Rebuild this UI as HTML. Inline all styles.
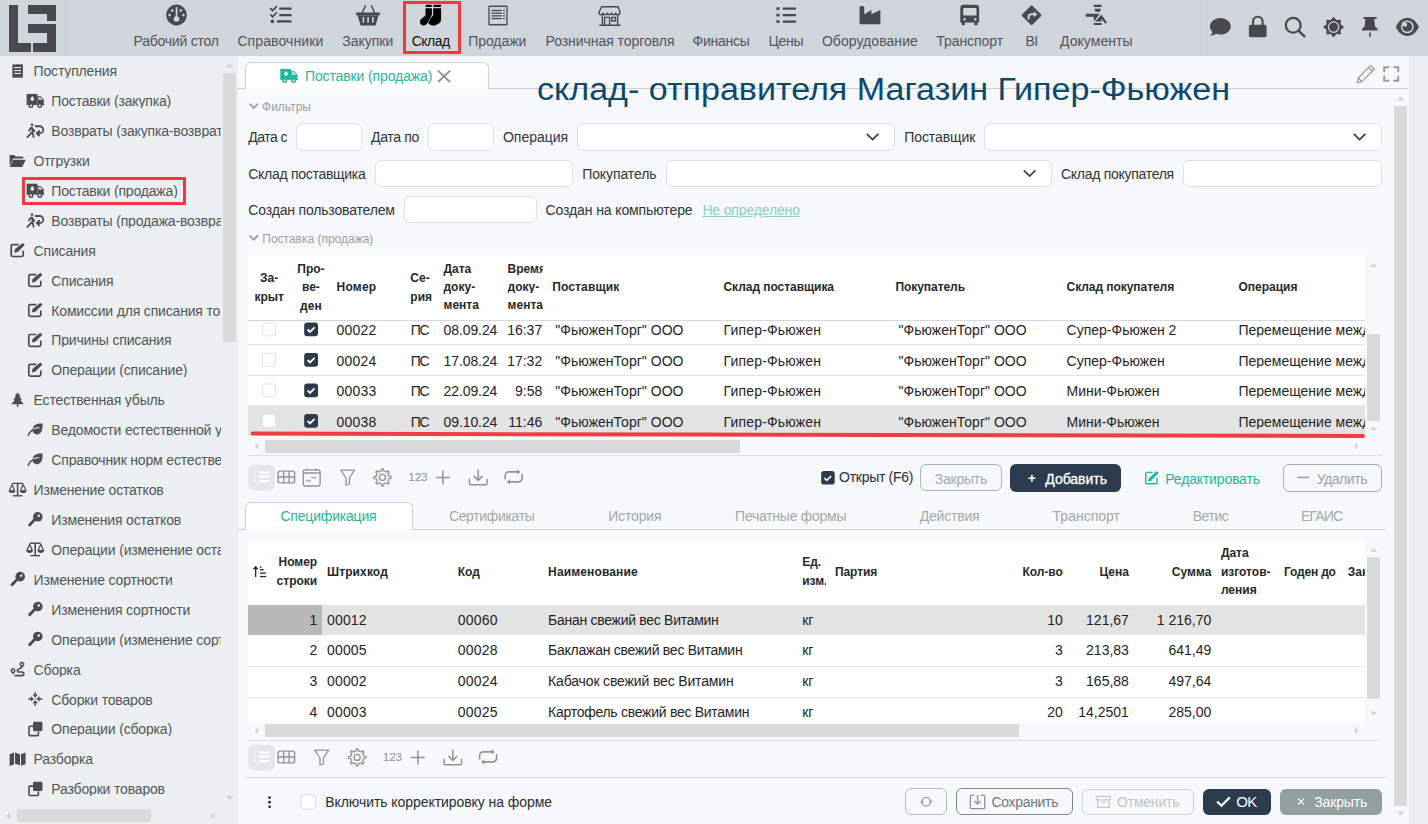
<!DOCTYPE html>
<html><head><meta charset="utf-8"><style>
html,body{margin:0;padding:0;width:1428px;height:824px;overflow:hidden;background:#f7f8fa;}
body{position:relative;font-family:"Liberation Sans", sans-serif;}
.t{position:absolute;white-space:nowrap;font-family:"Liberation Sans", sans-serif;}
svg{overflow:visible}
</style></head><body>
<div style="position:absolute;left:0px;top:0px;width:1428px;height:824px;background:#f7f8fa;border-radius:0px;box-sizing:border-box;"></div>
<div style="position:absolute;left:0px;top:0px;width:1428px;height:56px;background:#d0d4db;border-radius:0px;box-sizing:border-box;"></div>
<div style="position:absolute;left:0px;top:56px;width:238px;height:768px;background:#eceff0;border-radius:0px;box-sizing:border-box;"></div>
<div style="position:absolute;left:1409px;top:56px;width:19px;height:768px;background:#eaeef0;border-radius:0px;box-sizing:border-box;"></div>
<svg style="position:absolute;left:0;top:0" width="66" height="56"><g fill="#47494c"><path d="M9 5h9v38h13v9H9z"/><path d="M28 5h28v16h-9v-7H28z"/><path d="M28 24h28v28H33v-9h14V33H28z"/></g></svg>
<div style="position:absolute;left:65px;top:0px;width:1px;height:56px;background:#c9cdd3;border-radius:0px;box-sizing:border-box;"></div>
<div style="position:absolute;left:1200px;top:0px;width:1px;height:56px;background:#c9cdd3;border-radius:0px;box-sizing:border-box;"></div>
<div class="t" style="left:133.6px;top:34.3px;font-size:14px;line-height:14px;color:#50555b;font-weight:400;letter-spacing:-0.241px;">Рабочий стол</div>
<div class="t" style="left:237.4px;top:34.3px;font-size:14px;line-height:14px;color:#50555b;font-weight:400;letter-spacing:0.107px;">Справочники</div>
<div class="t" style="left:342.3px;top:34.3px;font-size:14px;line-height:14px;color:#50555b;font-weight:400;letter-spacing:-0.009px;">Закупки</div>
<div class="t" style="left:411.7px;top:34.3px;font-size:14px;line-height:14px;color:#111;font-weight:400;letter-spacing:-0.506px;">Склад</div>
<div class="t" style="left:468.2px;top:34.3px;font-size:14px;line-height:14px;color:#50555b;font-weight:400;letter-spacing:-0.067px;">Продажи</div>
<div class="t" style="left:545.5px;top:34.3px;font-size:14px;line-height:14px;color:#50555b;font-weight:400;letter-spacing:-0.049px;">Розничная торговля</div>
<div class="t" style="left:692.5px;top:34.3px;font-size:14px;line-height:14px;color:#50555b;font-weight:400;letter-spacing:-0.254px;">Финансы</div>
<div class="t" style="left:768.4px;top:34.3px;font-size:14px;line-height:14px;color:#50555b;font-weight:400;letter-spacing:-0.234px;">Цены</div>
<div class="t" style="left:821.9px;top:34.3px;font-size:14px;line-height:14px;color:#50555b;font-weight:400;letter-spacing:0.065px;">Оборудование</div>
<div class="t" style="left:936.2px;top:34.3px;font-size:14px;line-height:14px;color:#50555b;font-weight:400;letter-spacing:-0.036px;">Транспорт</div>
<div class="t" style="left:1025.5px;top:34.3px;font-size:14px;line-height:14px;color:#50555b;font-weight:400;letter-spacing:-0.617px;">BI</div>
<div class="t" style="left:1060.0px;top:34.3px;font-size:14px;line-height:14px;color:#50555b;font-weight:400;letter-spacing:0.048px;">Документы</div>
<div style="position:absolute;left:403px;top:1px;width:58px;height:53px;background:none;border:3px solid #ee3a40;border-radius:0px;box-sizing:border-box;"></div>
<svg style="position:absolute;left:0px;top:0px;display:none" width="1" height="1" viewBox="0 0 1 1"></svg>
<svg style="position:absolute;left:0;top:0" width="1428" height="56" viewBox="0 0 1428 56">
<g fill="#47494d">
 <circle cx="176.5" cy="15" r="10.4"/>
</g>
<g fill="#d0d4db">
 <rect x="175.7" y="7.2" width="1.7" height="10"/>
 <circle cx="176.5" cy="19" r="2.8"/>
 <circle cx="172.2" cy="10.5" r="1.3"/><circle cx="180.8" cy="10.5" r="1.3"/>
 <circle cx="169.6" cy="15.1" r="1.3"/><circle cx="183.4" cy="15.1" r="1.3"/>
</g>
<!-- checklist -->
<g stroke="#47494d" stroke-linecap="round" fill="none">
 <path d="M270.6 8.6l2 2 3.8-4" stroke-width="1.6"/>
 <path d="M270.6 14.8l2 2 3.8-4" stroke-width="1.6"/>
 <path d="M280.3 8.6H290.6M280.3 15.1H290.6M278 21.4H290.6" stroke-width="2.4"/>
</g>
<circle cx="272.4" cy="21.4" r="1.8" fill="#47494d"/>
<!-- basket -->
<g fill="#47494d">
 <path d="M361.2 13.2L365 5l1.3.6-3.5 7.6zM375.6 13.2L371.8 5l-1.3.6 3.5 7.6z"/>
 <rect x="356.2" y="12.6" width="23.6" height="2.8" rx="0.6"/>
 <path d="M357.6 15.4H378.4L375.6 25.4H360.6Z"/>
</g>
<g fill="#d0d4db"><rect x="362.6" y="17" width="1.6" height="5.6"/><rect x="367.3" y="17" width="1.6" height="5.6"/><rect x="372" y="17" width="1.6" height="5.6"/></g>
<!-- socks -->
<g fill="#000">
 <path d="M433.2 8.3H441.1V19.6C441.1 21 440.4 22.4 439.2 23.2L436 25C434.2 26 431.2 25.8 429.4 24.3 427.6 22.7 427.5 20.2 429.3 18.8L433.2 15.6Z"/>
 <path stroke="#d0d4db" stroke-width="1.1" paint-order="stroke" d="M425.5 8.3H431.9V14.8L427.2 23.6C426 25.6 422.8 26.2 421 24.5 419.4 23 419.5 20.6 421 19.3L425.5 15.2Z"/>
 <rect x="425.5" y="4.7" width="6.4" height="2.2" rx="1"/>
 <rect x="433.2" y="4.7" width="7.9" height="2.2" rx="1"/>
</g>
<!-- receipt -->
<g fill="none" stroke="#47494d" stroke-width="1.3">
 <path d="M489 6.6l1-.6 1 .6 1-.6 1 .6 1-.6 1 .6 1-.6 1 .6 1-.6 1 .6 1-.6 1 .6 1-.6 1 .6 1-.6 1 .6 1-.6 1 .6V24.4l-1 .6-1-.6-1 .6-1-.6-1 .6-1-.6-1 .6-1-.6-1 .6-1-.6-1 .6-1-.6-1 .6-1-.6-1 .6-1-.6-1 .6-1-.6Z"/>
</g>
<g fill="#47494d">
 <rect x="491.4" y="9.8" width="10.4" height="1.3"/><rect x="491.4" y="12.5" width="10.4" height="1.3"/><rect x="491.4" y="15.2" width="10.4" height="1.3"/><rect x="491.4" y="17.9" width="10.4" height="1.3"/>
 <rect x="503" y="9.8" width="1.8" height="1.3"/><rect x="503" y="12.5" width="1.8" height="1.3"/><rect x="503" y="15.2" width="1.8" height="1.3"/><rect x="503" y="17.9" width="1.8" height="1.3"/>
</g>
<!-- store -->
<g fill="none" stroke="#47494d" stroke-width="1.4">
 <path d="M601.6 6.8H618.2L620 12.4c0 1.4-1 2.2-2.1 2.2s-2.1-.8-2.1-2.2c0 1.4-1 2.2-2.1 2.2s-2.1-.8-2.1-2.2c0 1.4-1 2.2-2.1 2.2s-2.1-.8-2.1-2.2c0 1.4-1 2.2-2.1 2.2s-2.1-.8-2.1-2.2c0 1.4-1 2.2-2.1 2.2s-2.1-.8-2.1-2.2Z"/>
 <path d="M602.4 15v10M617.6 15v10M599.4 25.2H620.6"/>
 <path d="M604.6 25V17.4H609.6V25"/>
 <rect x="611.8" y="17.4" width="3.6" height="3.6"/>
</g>
<!-- list -->
<g fill="#47494d">
 <rect x="776.4" y="7.3" width="3.1" height="2.6"/><rect x="776.4" y="13.8" width="3.1" height="2.6"/><rect x="776.4" y="20.3" width="3.1" height="2.6"/>
 <rect x="782.6" y="7.4" width="13.6" height="2.4" rx="1"/><rect x="782.6" y="13.9" width="13.6" height="2.4" rx="1"/><rect x="782.6" y="20.4" width="13.6" height="2.4" rx="1"/>
</g>
<!-- factory -->
<path fill="#47494d" d="M859.6 6.2H864.2V14.2L871.4 10V14.2L880.4 10V23.4c0 .5-.4.9-.9.9H860.5c-.5 0-.9-.4-.9-.9Z"/>
<!-- bus -->
<path fill="#47494d" d="M963.6 4.8h12.6c1.6 0 2.9 1.3 2.9 2.9V22.6h-1.6v2c0 .4-.3.6-.6.6h-2c-.4 0-.6-.3-.6-.6v-2h-9.4v2c0 .4-.3.6-.6.6h-2c-.4 0-.6-.3-.6-.6v-2h-1.4V7.7c0-1.6 1.3-2.9 2.9-2.9z"/>
<g fill="#d0d4db"><rect x="963.2" y="8" width="13.3" height="7.6" rx="0.8"/><circle cx="964.6" cy="19.2" r="1.2"/><circle cx="975.2" cy="19.2" r="1.2"/></g>
<!-- diamond -->
<rect fill="#47494d" x="1024.3" y="7.9" width="14.6" height="14.6" rx="1.5" transform="rotate(45 1031.6 15.2)"/>
<path fill="none" stroke="#d0d4db" stroke-width="1.9" d="M1028.6 19.6v-2.6c0-1.5 1.2-2.7 2.7-2.7h3.6"/>
<path fill="#d0d4db" d="M1033.8 11.4l3.6 2.9-3.6 2.9z"/>
<!-- documents -->
<g fill="#47494d">
 <rect x="1093.8" y="4.7" width="7.9" height="2.2" rx="0.6"/>
 <path d="M1094.4 8.8H1100.8A3.2 3.2 0 0 1 1094.4 8.8Z"/>
 <path d="M1085.8 13.8H1099.8L1094.2 21.2H1093.8V16.8H1085.8Z"/>
 <path d="M1101.4 14.8L1107 22.6 1105.2 23.8 1101.6 18.8V21.5H1095.2Z"/>
 <rect x="1093.8" y="22.9" width="7.9" height="2.2" rx="0.6"/>
</g>
<!-- chat -->
<path fill="#47494d" d="M1220.4 18c5.7 0 10.4 3.7 10.4 8.3s-4.7 8.3-10.4 8.3c-1.5 0-3-.3-4.3-.8-1.6 1.1-3.6 1.8-6.1 1.8 1.3-1.1 2.2-2.4 2.5-3.6-1.8-1.5-2.5-3.5-2.5-5.7 0-4.6 4.7-8.3 10.4-8.3z"/>
<!-- lock -->
<path fill="none" stroke="#47494d" stroke-width="2.1" d="M1253 25v-3.4c0-3 2.2-4.8 4.8-4.8s4.8 1.8 4.8 4.8V25"/>
<rect fill="#47494d" x="1248.9" y="24.7" width="17.7" height="12.6" rx="1.8"/>
<!-- search -->
<circle fill="none" stroke="#47494d" stroke-width="2.2" cx="1293.2" cy="25.2" r="7.4"/>
<path stroke="#47494d" stroke-width="2.3" stroke-linecap="round" d="M1298.6 30.6L1304.4 36.4"/>
<!-- sun -->
<path fill="#47494d" d="M1333.6 16.8L1336.5 20.1 1340.9 19.8 1340.6 24.2 1344.2 27.1 1340.6 30 1340.9 34.4 1336.5 34.1 1333.6 37.4 1330.7 34.1 1326.3 34.4 1326.6 30 1323 27.1 1326.6 24.2 1326.3 19.8 1330.7 20.1Z"/>
<circle fill="none" stroke="#d0d4db" stroke-width="1.2" cx="1333.6" cy="27.1" r="5.2"/>
<!-- pin -->
<path fill="#47494d" d="M1363.5 17h13.1v1.9h-2.4l.8 7.6c1.4.8 2.6 2.2 2.7 4H1361.9c.1-1.8 1.3-3.2 2.7-4l.8-7.6h-1.9z"/>
<rect fill="#47494d" x="1369.3" y="32.4" width="1.5" height="4.6"/>
<!-- eye -->
<path fill="#47494d" d="M1395.8 26.9c2.4-5.2 6.6-9.1 11.5-9.1s9.1 3.9 11.6 9.1c-2.5 5.2-6.7 9-11.6 9s-9.1-3.8-11.5-9z"/>
<circle fill="#d0d4db" cx="1407.3" cy="26.9" r="6.4"/>
<circle fill="#47494d" cx="1407.3" cy="26.9" r="4.9"/>
<circle fill="#d0d4db" cx="1404.9" cy="24.6" r="2.2"/>
</svg>
<div class="t" style="left:33.6px;width:187.4px;overflow:hidden;top:64.1px;font-size:14px;line-height:14px;color:#50565b;font-weight:400;letter-spacing:-0.17px;">Поступления</div>
<div class="t" style="left:51.3px;width:169.7px;overflow:hidden;top:94.1px;font-size:14px;line-height:14px;color:#50565b;font-weight:400;letter-spacing:-0.17px;">Поставки (закупка)</div>
<div class="t" style="left:51.3px;width:169.7px;overflow:hidden;top:124.0px;font-size:14px;line-height:14px;color:#50565b;font-weight:400;letter-spacing:-0.17px;">Возвраты (закупка-возврат)</div>
<div class="t" style="left:33.6px;width:187.4px;overflow:hidden;top:153.9px;font-size:14px;line-height:14px;color:#50565b;font-weight:400;letter-spacing:-0.17px;">Отгрузки</div>
<div class="t" style="left:51.3px;width:169.7px;overflow:hidden;top:183.8px;font-size:14px;line-height:14px;color:#50565b;font-weight:400;letter-spacing:-0.17px;">Поставки (продажа)</div>
<div class="t" style="left:51.3px;width:169.7px;overflow:hidden;top:213.7px;font-size:14px;line-height:14px;color:#50565b;font-weight:400;letter-spacing:-0.17px;">Возвраты (продажа-возврат)</div>
<div class="t" style="left:33.6px;width:187.4px;overflow:hidden;top:243.7px;font-size:14px;line-height:14px;color:#50565b;font-weight:400;letter-spacing:-0.17px;">Списания</div>
<div class="t" style="left:51.3px;width:169.7px;overflow:hidden;top:273.6px;font-size:14px;line-height:14px;color:#50565b;font-weight:400;letter-spacing:-0.17px;">Списания</div>
<div class="t" style="left:51.3px;width:169.7px;overflow:hidden;top:303.5px;font-size:14px;line-height:14px;color:#50565b;font-weight:400;letter-spacing:-0.17px;">Комиссии для списания товаров</div>
<div class="t" style="left:51.3px;width:169.7px;overflow:hidden;top:333.4px;font-size:14px;line-height:14px;color:#50565b;font-weight:400;letter-spacing:-0.17px;">Причины списания</div>
<div class="t" style="left:51.3px;width:169.7px;overflow:hidden;top:363.3px;font-size:14px;line-height:14px;color:#50565b;font-weight:400;letter-spacing:-0.17px;">Операции (списание)</div>
<div class="t" style="left:33.6px;width:187.4px;overflow:hidden;top:393.3px;font-size:14px;line-height:14px;color:#50565b;font-weight:400;letter-spacing:-0.17px;">Естественная убыль</div>
<div class="t" style="left:51.3px;width:169.7px;overflow:hidden;top:423.2px;font-size:14px;line-height:14px;color:#50565b;font-weight:400;letter-spacing:-0.17px;">Ведомости естественной убыли</div>
<div class="t" style="left:51.3px;width:169.7px;overflow:hidden;top:453.1px;font-size:14px;line-height:14px;color:#50565b;font-weight:400;letter-spacing:-0.17px;">Справочник норм естественной убыли</div>
<div class="t" style="left:33.6px;width:187.4px;overflow:hidden;top:483.0px;font-size:14px;line-height:14px;color:#50565b;font-weight:400;letter-spacing:-0.17px;">Изменение остатков</div>
<div class="t" style="left:51.3px;width:169.7px;overflow:hidden;top:512.9px;font-size:14px;line-height:14px;color:#50565b;font-weight:400;letter-spacing:-0.17px;">Изменения остатков</div>
<div class="t" style="left:51.3px;width:169.7px;overflow:hidden;top:542.9px;font-size:14px;line-height:14px;color:#50565b;font-weight:400;letter-spacing:-0.17px;">Операции (изменение остатков)</div>
<div class="t" style="left:33.6px;width:187.4px;overflow:hidden;top:572.8px;font-size:14px;line-height:14px;color:#50565b;font-weight:400;letter-spacing:-0.17px;">Изменение сортности</div>
<div class="t" style="left:51.3px;width:169.7px;overflow:hidden;top:602.7px;font-size:14px;line-height:14px;color:#50565b;font-weight:400;letter-spacing:-0.17px;">Изменения сортности</div>
<div class="t" style="left:51.3px;width:169.7px;overflow:hidden;top:632.6px;font-size:14px;line-height:14px;color:#50565b;font-weight:400;letter-spacing:-0.17px;">Операции (изменение сортности)</div>
<div class="t" style="left:33.6px;width:187.4px;overflow:hidden;top:662.5px;font-size:14px;line-height:14px;color:#50565b;font-weight:400;letter-spacing:-0.17px;">Сборка</div>
<div class="t" style="left:51.3px;width:169.7px;overflow:hidden;top:692.5px;font-size:14px;line-height:14px;color:#50565b;font-weight:400;letter-spacing:-0.17px;">Сборки товаров</div>
<div class="t" style="left:51.3px;width:169.7px;overflow:hidden;top:722.4px;font-size:14px;line-height:14px;color:#50565b;font-weight:400;letter-spacing:-0.17px;">Операции (сборка)</div>
<div class="t" style="left:33.6px;width:187.4px;overflow:hidden;top:752.3px;font-size:14px;line-height:14px;color:#50565b;font-weight:400;letter-spacing:-0.17px;">Разборка</div>
<div class="t" style="left:51.3px;width:169.7px;overflow:hidden;top:782.2px;font-size:14px;line-height:14px;color:#50565b;font-weight:400;letter-spacing:-0.17px;">Разборки товаров</div>
<svg style="position:absolute;left:0;top:0" width="237" height="824"><g transform="translate(17.6,70.60)"><path fill="#4a4d50" d="M-5.2-6.7l1.05.8 1.05-.8 1.05.8 1.05-.8 1.05.8 1.05-.8 1.05.8 1.05-.8 1.05.8 1.05-.8V6.7l-1.05.8-1.05-.8-1.05.8-1.05-.8-1.05.8-1.05-.8-1.05.8-1.05-.8-1.05.8-1.05-.8z"/>
<g fill="#eceff1"><rect x="-3.4" y="-3.6" width="6.8" height="1.1"/><rect x="-3.4" y="-0.6" width="6.8" height="1.1"/><rect x="-3.4" y="2.3" width="6.8" height="1.1"/></g></g><g transform="translate(35.2,100.52)"><g fill="#4a4d50"><path d="M-8.6-6.6H2.3V4.4H-8.6z"/><path d="M2.3-4.3H5.4L8.6-.8V3.4H9.2V4.4H2.3z"/>
<circle cx="-4.3" cy="5.1" r="2.5"/><circle cx="4.6" cy="5.1" r="2.5"/></g>
<g fill="#eceff1"><circle cx="-4.3" cy="5.1" r="1.1"/><circle cx="4.6" cy="5.1" r="1.1"/><path d="M3.4-3.2H5L7.3-.7H3.4z"/>
<path d="M-2.9-4.6c-1.1 1.4-1.8 2.3-1.8 3.2a1.8 1.8 0 0 0 3.6 0c0-.9-.7-1.8-1.8-3.2z"/></g></g><g transform="translate(35.2,130.44)"><g fill="#4a4d50"><circle cx="-3.2" cy="-5.6" r="1.3"/></g>
<g fill="none" stroke="#4a4d50" stroke-width="1.8" stroke-linecap="round" stroke-linejoin="round">
<path d="M-6.2 0.2L-4.4-2.6H-3L-2.5 2.4-1.6 6.6M-2.8-2L-0.8 0.6M-3 1.6L-7.8 6.6"/>
<path d="M0.3-4.2H4.6A3.5 3.5 0 0 1 4.6 2.8H1.8M4 0.4L1.5 2.8 4 5.2"/></g></g><g transform="translate(17.6,160.36)"><g transform="translate(0,.6)"><path fill="#4a4d50" d="M-8-6H-3.4L-1.8-4.4H5.6V-2.4H-4.4L-8 4.8z"/><path fill="#4a4d50" d="M-4.6-1.2H8.2L4.6 6H-8z"/></g></g><g transform="translate(35.2,190.28)"><g fill="#4a4d50"><path d="M-8.6-6.6H2.3V4.4H-8.6z"/><path d="M2.3-4.3H5.4L8.6-.8V3.4H9.2V4.4H2.3z"/>
<circle cx="-4.3" cy="5.1" r="2.5"/><circle cx="4.6" cy="5.1" r="2.5"/></g>
<g fill="#eceff1"><circle cx="-4.3" cy="5.1" r="1.1"/><circle cx="4.6" cy="5.1" r="1.1"/><path d="M3.4-3.2H5L7.3-.7H3.4z"/>
<path d="M-2.9-4.6c-1.1 1.4-1.8 2.3-1.8 3.2a1.8 1.8 0 0 0 3.6 0c0-.9-.7-1.8-1.8-3.2z"/></g></g><g transform="translate(35.2,220.20)"><g fill="#4a4d50"><circle cx="-3.2" cy="-5.6" r="1.3"/></g>
<g fill="none" stroke="#4a4d50" stroke-width="1.8" stroke-linecap="round" stroke-linejoin="round">
<path d="M-6.2 0.2L-4.4-2.6H-3L-2.5 2.4-1.6 6.6M-2.8-2L-0.8 0.6M-3 1.6L-7.8 6.6"/>
<path d="M0.3-4.2H4.6A3.5 3.5 0 0 1 4.6 2.8H1.8M4 0.4L1.5 2.8 4 5.2"/></g></g><g transform="translate(17.6,250.12)"><g fill="none" stroke="#4a4d50" stroke-width="1.7"><path d="M1.2-5.4H-4.8a1.6 1.6 0 0 0-1.6 1.6V4.8a1.6 1.6 0 0 0 1.6 1.6H4a1.6 1.6 0 0 0 1.6-1.6V0.6"/></g>
<path fill="#4a4d50" d="M5.2-7.2L7.2-5.2 0.2 1.8-3.4 2.6-2.6-1zM4-6L6 -4"/></g><g transform="translate(35.2,280.04)"><g fill="none" stroke="#4a4d50" stroke-width="1.7"><path d="M1.2-5.4H-4.8a1.6 1.6 0 0 0-1.6 1.6V4.8a1.6 1.6 0 0 0 1.6 1.6H4a1.6 1.6 0 0 0 1.6-1.6V0.6"/></g>
<path fill="#4a4d50" d="M5.2-7.2L7.2-5.2 0.2 1.8-3.4 2.6-2.6-1zM4-6L6 -4"/></g><g transform="translate(35.2,309.96)"><g fill="none" stroke="#4a4d50" stroke-width="1.7"><path d="M1.2-5.4H-4.8a1.6 1.6 0 0 0-1.6 1.6V4.8a1.6 1.6 0 0 0 1.6 1.6H4a1.6 1.6 0 0 0 1.6-1.6V0.6"/></g>
<path fill="#4a4d50" d="M5.2-7.2L7.2-5.2 0.2 1.8-3.4 2.6-2.6-1zM4-6L6 -4"/></g><g transform="translate(35.2,339.88)"><g fill="none" stroke="#4a4d50" stroke-width="1.7"><path d="M1.2-5.4H-4.8a1.6 1.6 0 0 0-1.6 1.6V4.8a1.6 1.6 0 0 0 1.6 1.6H4a1.6 1.6 0 0 0 1.6-1.6V0.6"/></g>
<path fill="#4a4d50" d="M5.2-7.2L7.2-5.2 0.2 1.8-3.4 2.6-2.6-1zM4-6L6 -4"/></g><g transform="translate(35.2,369.80)"><g fill="none" stroke="#4a4d50" stroke-width="1.7"><path d="M1.2-5.4H-4.8a1.6 1.6 0 0 0-1.6 1.6V4.8a1.6 1.6 0 0 0 1.6 1.6H4a1.6 1.6 0 0 0 1.6-1.6V0.6"/></g>
<path fill="#4a4d50" d="M5.2-7.2L7.2-5.2 0.2 1.8-3.4 2.6-2.6-1zM4-6L6 -4"/></g><g transform="translate(17.6,399.72)"><path fill="#4a4d50" d="M0-7.2L3 -3.4H1.6L4.4 0H2.6L6.2 4.6H.7V7.2H-.7V4.6H-6.2L-2.6 0H-4.4L-1.6-3.4H-3z"/></g><g transform="translate(35.2,429.64)"><path fill="#4a4d50" d="M7.4-6C3.2-6.4-2.2-5.6-2.6 0c-.1 1.2.2 2.4.8 3.2 1.6 1.6 4.6 2.6 7.2-.2 1.8-2 2-5.2 2-9z"/>
<path fill="none" stroke="#4a4d50" stroke-width="1.4" stroke-linecap="round" d="M-7 6c1.2-3.4 3.4-5.8 7.4-6.6"/>
<path fill="none" stroke="#eceff1" stroke-width="1.1" d="M-1.8-.6C.2-1.8 2.2-2 4.2-1.8"/></g><g transform="translate(35.2,459.56)"><path fill="#4a4d50" d="M7.4-6C3.2-6.4-2.2-5.6-2.6 0c-.1 1.2.2 2.4.8 3.2 1.6 1.6 4.6 2.6 7.2-.2 1.8-2 2-5.2 2-9z"/>
<path fill="none" stroke="#4a4d50" stroke-width="1.4" stroke-linecap="round" d="M-7 6c1.2-3.4 3.4-5.8 7.4-6.6"/>
<path fill="none" stroke="#eceff1" stroke-width="1.1" d="M-1.8-.6C.2-1.8 2.2-2 4.2-1.8"/></g><g transform="translate(17.6,489.48)"><g fill="#4a4d50"><rect x="-0.8" y="-5.6" width="1.6" height="11.2"/><rect x="-5.6" y="-6.8" width="11.2" height="1.4" rx=".6"/><rect x="-4.8" y="5.6" width="9.6" height="1.4"/></g>
<g fill="none" stroke="#4a4d50" stroke-width="1.2" stroke-linejoin="round"><path d="M-5.6-5L-8.4 1.4H-2.8Z"/><path d="M5.6-5L2.8 1.4H8.4Z"/></g>
<g fill="#4a4d50"><path d="M-8.6 1.2H-2.6A3 2.4 0 0 1-8.6 1.2z"/><path d="M2.6 1.2H8.6A3 2.4 0 0 1 2.6 1.2z"/></g></g><g transform="translate(35.2,519.40)"><circle fill="#4a4d50" cx="2.6" cy="-2.6" r="4.8"/><circle fill="#eceff1" cx="3.6" cy="-3.6" r="1.2"/>
<path fill="none" stroke="#4a4d50" stroke-width="2.8" stroke-linecap="round" d="M-0.6 0.4L-5.6 5.6"/>
<path fill="#4a4d50" d="M-4.6 2.8l1.6 1.6-1 1-1.6-1.6z"/></g><g transform="translate(35.2,549.32)"><g fill="#4a4d50"><rect x="-0.8" y="-5.6" width="1.6" height="11.2"/><rect x="-5.6" y="-6.8" width="11.2" height="1.4" rx=".6"/><rect x="-4.8" y="5.6" width="9.6" height="1.4"/></g>
<g fill="none" stroke="#4a4d50" stroke-width="1.2" stroke-linejoin="round"><path d="M-5.6-5L-8.4 1.4H-2.8Z"/><path d="M5.6-5L2.8 1.4H8.4Z"/></g>
<g fill="#4a4d50"><path d="M-8.6 1.2H-2.6A3 2.4 0 0 1-8.6 1.2z"/><path d="M2.6 1.2H8.6A3 2.4 0 0 1 2.6 1.2z"/></g></g><g transform="translate(17.6,579.24)"><circle fill="#4a4d50" cx="2.6" cy="-2.6" r="4.8"/><circle fill="#eceff1" cx="3.6" cy="-3.6" r="1.2"/>
<path fill="none" stroke="#4a4d50" stroke-width="2.8" stroke-linecap="round" d="M-0.6 0.4L-5.6 5.6"/>
<path fill="#4a4d50" d="M-4.6 2.8l1.6 1.6-1 1-1.6-1.6z"/></g><g transform="translate(35.2,609.16)"><circle fill="#4a4d50" cx="2.6" cy="-2.6" r="4.8"/><circle fill="#eceff1" cx="3.6" cy="-3.6" r="1.2"/>
<path fill="none" stroke="#4a4d50" stroke-width="2.8" stroke-linecap="round" d="M-0.6 0.4L-5.6 5.6"/>
<path fill="#4a4d50" d="M-4.6 2.8l1.6 1.6-1 1-1.6-1.6z"/></g><g transform="translate(35.2,639.08)"><circle fill="#4a4d50" cx="2.6" cy="-2.6" r="4.8"/><circle fill="#eceff1" cx="3.6" cy="-3.6" r="1.2"/>
<path fill="none" stroke="#4a4d50" stroke-width="2.8" stroke-linecap="round" d="M-0.6 0.4L-5.6 5.6"/>
<path fill="#4a4d50" d="M-4.6 2.8l1.6 1.6-1 1-1.6-1.6z"/></g><g transform="translate(17.6,669.00)"><g fill="none" stroke="#4a4d50" stroke-width="1.6" stroke-linecap="round">
<path d="M4.1-1.6L1.1 0.2A1.4 1.4 0 0 0 1.1 3H4.4A1.8 1.8 0 0 1 4.4 6.6H-2.5"/></g>
<g fill="#4a4d50"><path d="M-4.6 5.2C-4.6 5.2-7.1 3-7.1 1.7A2.5 2.5 0 0 1-2.1 1.7C-2.1 3-4.6 5.2-4.6 5.2Z"/><path d="M4.3-1.2C4.3-1.2 1.8-3.4 1.8-4.7A2.5 2.5 0 0 1 6.8-4.7C6.8-3.4 4.3-1.2 4.3-1.2Z"/></g>
<g fill="#eceff1"><circle cx="-4.6" cy="1.7" r="1"/><circle cx="4.3" cy="-4.7" r="1"/></g></g><g transform="translate(35.2,698.92)"><g fill="#4a4d50"><g transform="rotate(0)"><path d="M-2.8-4.4H2.8L0-1.4Z"/><rect x="-.75" y="-7" width="1.5" height="2.8"/></g><g transform="rotate(90)"><path d="M-2.8-4.4H2.8L0-1.4Z"/><rect x="-.75" y="-7" width="1.5" height="2.8"/></g><g transform="rotate(180)"><path d="M-2.8-4.4H2.8L0-1.4Z"/><rect x="-.75" y="-7" width="1.5" height="2.8"/></g><g transform="rotate(270)"><path d="M-2.8-4.4H2.8L0-1.4Z"/><rect x="-.75" y="-7" width="1.5" height="2.8"/></g><circle r=".7"/></g></g><g transform="translate(35.2,728.84)"><path fill="none" stroke="#4a4d50" stroke-width="1.6" d="M-2.2-2.6H-5.2A1 1 0 0 0-6.2-1.6V5.8A1 1 0 0 0-5.2 6.8H2.2A1 1 0 0 0 3.2 5.8V2.8"/>
<rect fill="#4a4d50" x="-2.2" y="-7" width="9.4" height="9.4" rx="1.4"/></g><g transform="translate(17.6,758.76)"><g fill="#4a4d50"><path d="M-8-4.4L-3.6-6.2V5.8L-8 7.2z"/><path d="M-2.6-6.2L2.4-4.6V6.6L-2.6 5z"/><path d="M3.4-4.6L8-6.2V5.4L3.4 7z"/></g></g><g transform="translate(35.2,788.68)"><path fill="none" stroke="#4a4d50" stroke-width="1.6" d="M-2.2-2.6H-5.2A1 1 0 0 0-6.2-1.6V5.8A1 1 0 0 0-5.2 6.8H2.2A1 1 0 0 0 3.2 5.8V2.8"/>
<rect fill="#4a4d50" x="-2.2" y="-7" width="9.4" height="9.4" rx="1.4"/></g></svg>
<div style="position:absolute;left:22px;top:177px;width:164px;height:28px;background:none;border:3px solid #ee3a40;border-radius:0px;box-sizing:border-box;"></div>
<div style="position:absolute;left:223px;top:73px;width:13px;height:269px;background:#dadada;border-radius:0px;box-sizing:border-box;"></div>
<svg style="position:absolute;left:0;top:0" width="237" height="824"><path fill="#d0d2d4" d="M225.6 67.6h7.6l-3.8-4z"/><path fill="#d0d2d4" d="M225.6 796h7.6l-3.8 4z"/><path fill="#d0d2d4" d="M10 812.2v7.2l-3.6-3.6z"/><path fill="#d0d2d4" d="M211.6 812.2v7.2l3.6-3.6z"/></svg>
<div style="position:absolute;left:17px;top:809px;width:134px;height:13px;background:#dadada;border-radius:0px;box-sizing:border-box;"></div>
<div style="position:absolute;left:237px;top:88px;width:1171px;height:1px;background:#cdd1d6;border-radius:0px;box-sizing:border-box;"></div>
<div style="position:absolute;left:245px;top:62px;width:244px;height:27px;background:#fff;border:1px solid #cfd3d8;border-bottom:none;border-radius:6px 6px 0 0;box-sizing:border-box"></div>
<svg style="position:absolute;left:0;top:0" width="500" height="100"><g transform="translate(288.9,75.5)"><g fill="#1fb89a"><path d="M-8.6-6.6H2.3V4.4H-8.6z"/><path d="M2.3-4.3H5.4L8.6-.8V3.4H9.2V4.4H2.3z"/>
<circle cx="-4.3" cy="5.1" r="2.5"/><circle cx="4.6" cy="5.1" r="2.5"/></g>
<g fill="#fff"><circle cx="-4.3" cy="5.1" r="1.1"/><circle cx="4.6" cy="5.1" r="1.1"/><path d="M3.4-3.2H5L7.3-.7H3.4z"/>
<path d="M-2.9-4.6c-1.1 1.4-1.8 2.3-1.8 3.2a1.8 1.8 0 0 0 3.6 0c0-.9-.7-1.8-1.8-3.2z"/></g></g><path stroke="#8c8c8c" stroke-width="1.8" d="M438 70.6L450.2 82.2M450.2 70.6L438 82.2"/></svg>
<div class="t" style="left:305.0px;top:69.1px;font-size:14px;line-height:14px;color:#1fb89a;font-weight:400;letter-spacing:-0.12px;">Поставки (продажа)</div>
<div class="t" style="left:537.0px;top:73.8px;font-size:31px;line-height:31px;color:#0c496c;font-weight:400;transform:scaleX(1.0983);transform-origin:0 0;">склад- отправителя Магазин Гипер-Фьюжен</div>
<svg style="position:absolute;left:0;top:0" width="1428" height="100">
<g fill="none" stroke="#98a0a3" stroke-width="1.3" stroke-linejoin="round">
<path d="M1357.2 82.6l1-4.6 12.4-12.4 3.6 3.6-12.4 12.4z M1368.6 67.6l3.6 3.6 M1358.2 78l3.6 3.6"/>
</g>
<g fill="none" stroke="#959ea1" stroke-width="2" stroke-linecap="round">
<path d="M1384.2 71.4V67.2h4.2 M1394 67.2h4.2v4.2 M1398.2 76.6V80.8h-4.2 M1388.4 80.8H1384.2v-4.2"/>
</g></svg>
<div style="position:absolute;left:1394px;top:106px;width:13px;height:700px;background:#dadada;border-radius:0px;box-sizing:border-box;"></div>
<svg style="position:absolute;left:0;top:0" width="1428" height="824"><path fill="#d3d5d7" d="M1396.6 100.4h7.6l-3.8-4z"/><path fill="#d3d5d7" d="M1396.6 811.4h7.6l-3.8 4z"/></svg>
<svg style="position:absolute;left:0;top:0" width="400" height="260"><g fill="none" stroke="#9aa0a4" stroke-width="1.9"><path d="M249.6 103.6l4.2 4.2 4.2-4.2"/><path d="M249.6 235.4l4.2 4.2 4.2-4.2"/></g></svg>
<div class="t" style="left:262.0px;top:100.5px;font-size:12px;line-height:12px;color:#9da1a5;font-weight:400;letter-spacing:0.009px;">Фильтры</div>
<div class="t" style="left:262.3px;top:233.0px;font-size:12px;line-height:12px;color:#9da1a5;font-weight:400;letter-spacing:-0.01px;">Поставка (продажа)</div>
<div class="t" style="left:248.3px;top:130.1px;font-size:14px;line-height:14px;color:#30353a;font-weight:400;letter-spacing:-0.515px;">Дата с</div>
<div style="position:absolute;left:296px;top:123px;width:66px;height:28px;background:#fff;border:1px solid #dde0e4;border-radius:6px;box-sizing:border-box"></div>
<div class="t" style="left:371.0px;top:130.1px;font-size:14px;line-height:14px;color:#30353a;font-weight:400;letter-spacing:-0.324px;">Дата по</div>
<div style="position:absolute;left:428px;top:123px;width:66px;height:28px;background:#fff;border:1px solid #dde0e4;border-radius:6px;box-sizing:border-box"></div>
<div class="t" style="left:503.0px;top:130.1px;font-size:14px;line-height:14px;color:#30353a;font-weight:400;letter-spacing:-0.031px;">Операция</div>
<div style="position:absolute;left:577px;top:123px;width:318px;height:28px;background:#fff;border:1px solid #dde0e4;border-radius:6px;box-sizing:border-box"></div>
<svg style="position:absolute;left:0;top:0" width="1428" height="260"><path fill="none" stroke="#3c4246" stroke-width="1.8" d="M866.8 133.8l5.8 5.8 5.8-5.8"/></svg>
<div class="t" style="left:904.2px;top:130.1px;font-size:14px;line-height:14px;color:#30353a;font-weight:400;letter-spacing:-0.066px;">Поставщик</div>
<div style="position:absolute;left:984px;top:123px;width:398px;height:28px;background:#fff;border:1px solid #dde0e4;border-radius:6px;box-sizing:border-box"></div>
<svg style="position:absolute;left:0;top:0" width="1428" height="260"><path fill="none" stroke="#3c4246" stroke-width="1.8" d="M1353.8 133.8l5.8 5.8 5.8-5.8"/></svg>
<div class="t" style="left:248.3px;top:167.1px;font-size:14px;line-height:14px;color:#30353a;font-weight:400;letter-spacing:-0.288px;">Склад поставщика</div>
<div style="position:absolute;left:375px;top:160px;width:198px;height:27px;background:#fff;border:1px solid #dde0e4;border-radius:6px;box-sizing:border-box"></div>
<div class="t" style="left:582.2px;top:167.1px;font-size:14px;line-height:14px;color:#30353a;font-weight:400;letter-spacing:-0.093px;">Покупатель</div>
<div style="position:absolute;left:666px;top:160px;width:386px;height:27px;background:#fff;border:1px solid #dde0e4;border-radius:6px;box-sizing:border-box"></div>
<svg style="position:absolute;left:0;top:0" width="1428" height="260"><path fill="none" stroke="#3c4246" stroke-width="1.8" d="M1023.8 170.3l5.8 5.8 5.8-5.8"/></svg>
<div class="t" style="left:1061.0px;top:167.1px;font-size:14px;line-height:14px;color:#30353a;font-weight:400;letter-spacing:-0.285px;">Склад покупателя</div>
<div style="position:absolute;left:1183px;top:160px;width:199px;height:27px;background:#fff;border:1px solid #dde0e4;border-radius:6px;box-sizing:border-box"></div>
<div class="t" style="left:248.3px;top:203.1px;font-size:14px;line-height:14px;color:#30353a;font-weight:400;letter-spacing:-0.171px;">Создан пользователем</div>
<div style="position:absolute;left:404px;top:196px;width:133px;height:27px;background:#fff;border:1px solid #dde0e4;border-radius:6px;box-sizing:border-box"></div>
<div class="t" style="left:545.5px;top:203.1px;font-size:14px;line-height:14px;color:#30353a;font-weight:400;letter-spacing:-0.111px;">Создан на компьютере</div>
<div class="t" style="left:702.4px;top:203.1px;font-size:14px;line-height:14px;color:#86d3c2;font-weight:400;letter-spacing:-0.153px;text-decoration:underline;">Не определено</div>
<div style="position:absolute;left:248px;top:255px;width:1117px;height:182px;background:#fff;border-radius:0px;box-sizing:border-box;"></div>
<div style="position:absolute;left:248px;top:320px;width:1117px;height:1px;background:#d5d9dd;border-radius:0px;box-sizing:border-box;"></div>
<div style="position:absolute;left:248px;top:344px;width:1117px;height:1px;background:#e1e4e7;border-radius:0px;box-sizing:border-box;"></div>
<div style="position:absolute;left:248px;top:375px;width:1117px;height:1px;background:#e1e4e7;border-radius:0px;box-sizing:border-box;"></div>
<div style="position:absolute;left:248px;top:405px;width:1117px;height:1px;background:#e1e4e7;border-radius:0px;box-sizing:border-box;"></div>
<div style="position:absolute;left:248px;top:406px;width:1117px;height:30px;background:#e3e3e3;border-radius:0px;box-sizing:border-box;"></div>
<div class="t" style="left:229.2px;width:80px;text-align:center;top:271.8px;font-size:12px;line-height:12px;color:#25292d;font-weight:700">За-</div>
<div class="t" style="left:229.2px;width:80px;text-align:center;top:291.1px;font-size:12px;line-height:12px;color:#25292d;font-weight:700">крыт</div>
<div class="t" style="left:270.9px;width:80px;text-align:center;top:262.6px;font-size:12px;line-height:12px;color:#25292d;font-weight:700">Про-</div>
<div class="t" style="left:270.9px;width:80px;text-align:center;top:281.1px;font-size:12px;line-height:12px;color:#25292d;font-weight:700">ве-</div>
<div class="t" style="left:270.9px;width:80px;text-align:center;top:299.5px;font-size:12px;line-height:12px;color:#25292d;font-weight:700">ден</div>
<div class="t" style="left:336.6px;top:280.8px;font-size:12px;line-height:12px;color:#25292d;font-weight:700;letter-spacing:0.216px;">Номер</div>
<div class="t" style="left:410.3px;top:271.8px;font-size:12px;line-height:12px;color:#25292d;font-weight:700;">Се-</div>
<div class="t" style="left:410.3px;top:291.1px;font-size:12px;line-height:12px;color:#25292d;font-weight:700;">рия</div>
<div class="t" style="left:443.5px;top:262.8px;font-size:12px;line-height:12px;color:#25292d;font-weight:700;">Дата</div>
<div class="t" style="left:443.5px;top:281.1px;font-size:12px;line-height:12px;color:#25292d;font-weight:700;">доку-</div>
<div class="t" style="left:443.5px;top:299.3px;font-size:12px;line-height:12px;color:#25292d;font-weight:700;">мента</div>
<div class="t" style="left:507.6px;width:35.4px;overflow:hidden;top:262.8px;font-size:12px;line-height:12px;color:#25292d;font-weight:700;">Время</div>
<div class="t" style="left:507.6px;width:35.4px;overflow:hidden;top:281.1px;font-size:12px;line-height:12px;color:#25292d;font-weight:700;">доку-</div>
<div class="t" style="left:507.6px;width:35.4px;overflow:hidden;top:299.3px;font-size:12px;line-height:12px;color:#25292d;font-weight:700;">мента</div>
<div class="t" style="left:552.2px;top:281.1px;font-size:12px;line-height:12px;color:#25292d;font-weight:700;letter-spacing:0.144px;">Поставщик</div>
<div class="t" style="left:723.5px;top:281.1px;font-size:12px;line-height:12px;color:#25292d;font-weight:700;letter-spacing:-0.049px;">Склад поставщика</div>
<div class="t" style="left:895.4px;top:281.1px;font-size:12px;line-height:12px;color:#25292d;font-weight:700;letter-spacing:-0.051px;">Покупатель</div>
<div class="t" style="left:1066.6px;top:281.1px;font-size:12px;line-height:12px;color:#25292d;font-weight:700;letter-spacing:-0.058px;">Склад покупателя</div>
<div class="t" style="left:1238.4px;top:281.1px;font-size:12px;line-height:12px;color:#25292d;font-weight:700;letter-spacing:-0.002px;">Операция</div>
<div class="t" style="left:336.6px;top:323.0px;font-size:14px;line-height:14px;color:#1f2326;font-weight:400;letter-spacing:0.172px;">00022</div>
<div class="t" style="left:410.7px;top:323.0px;font-size:14px;line-height:14px;color:#1f2326;font-weight:400;letter-spacing:-1.294px;">ПС</div>
<div class="t" style="left:443.5px;top:323.0px;font-size:14px;line-height:14px;color:#1f2326;font-weight:400;letter-spacing:-0.088px;">08.09.24</div>
<div class="t" style="right:885.8px;top:323.0px;font-size:14px;line-height:14px;color:#1f2326;font-weight:400;">16:37</div>
<div class="t" style="left:555.3px;top:323.0px;font-size:14px;line-height:14px;color:#1f2326;font-weight:400;letter-spacing:0.024px;">"ФьюженТорг" ООО</div>
<div class="t" style="left:723.5px;top:323.0px;font-size:14px;line-height:14px;color:#1f2326;font-weight:400;letter-spacing:0.176px;">Гипер-Фьюжен</div>
<div class="t" style="left:898.5px;top:323.0px;font-size:14px;line-height:14px;color:#1f2326;font-weight:400;letter-spacing:0.024px;">"ФьюженТорг" ООО</div>
<div class="t" style="left:1066.6px;top:323.0px;font-size:14px;line-height:14px;color:#1f2326;font-weight:400;">Супер-Фьюжен 2</div>
<div class="t" style="left:1238.4px;width:126.6px;overflow:hidden;top:323.0px;font-size:14px;line-height:14px;color:#1f2326;font-weight:400;">Перемещение между складами</div>
<div class="t" style="left:336.6px;top:353.5px;font-size:14px;line-height:14px;color:#1f2326;font-weight:400;letter-spacing:0.172px;">00024</div>
<div class="t" style="left:410.7px;top:353.5px;font-size:14px;line-height:14px;color:#1f2326;font-weight:400;letter-spacing:-1.294px;">ПС</div>
<div class="t" style="left:443.5px;top:353.5px;font-size:14px;line-height:14px;color:#1f2326;font-weight:400;letter-spacing:-0.088px;">17.08.24</div>
<div class="t" style="right:885.8px;top:353.5px;font-size:14px;line-height:14px;color:#1f2326;font-weight:400;">17:32</div>
<div class="t" style="left:555.3px;top:353.5px;font-size:14px;line-height:14px;color:#1f2326;font-weight:400;letter-spacing:0.024px;">"ФьюженТорг" ООО</div>
<div class="t" style="left:723.5px;top:353.5px;font-size:14px;line-height:14px;color:#1f2326;font-weight:400;letter-spacing:0.176px;">Гипер-Фьюжен</div>
<div class="t" style="left:898.5px;top:353.5px;font-size:14px;line-height:14px;color:#1f2326;font-weight:400;letter-spacing:0.024px;">"ФьюженТорг" ООО</div>
<div class="t" style="left:1066.6px;top:353.5px;font-size:14px;line-height:14px;color:#1f2326;font-weight:400;">Супер-Фьюжен</div>
<div class="t" style="left:1238.4px;width:126.6px;overflow:hidden;top:353.5px;font-size:14px;line-height:14px;color:#1f2326;font-weight:400;">Перемещение между складами</div>
<div class="t" style="left:336.6px;top:384.0px;font-size:14px;line-height:14px;color:#1f2326;font-weight:400;letter-spacing:0.172px;">00033</div>
<div class="t" style="left:410.7px;top:384.0px;font-size:14px;line-height:14px;color:#1f2326;font-weight:400;letter-spacing:-1.294px;">ПС</div>
<div class="t" style="left:443.5px;top:384.0px;font-size:14px;line-height:14px;color:#1f2326;font-weight:400;letter-spacing:-0.088px;">22.09.24</div>
<div class="t" style="right:885.8px;top:384.0px;font-size:14px;line-height:14px;color:#1f2326;font-weight:400;">9:58</div>
<div class="t" style="left:555.3px;top:384.0px;font-size:14px;line-height:14px;color:#1f2326;font-weight:400;letter-spacing:0.024px;">"ФьюженТорг" ООО</div>
<div class="t" style="left:723.5px;top:384.0px;font-size:14px;line-height:14px;color:#1f2326;font-weight:400;letter-spacing:0.176px;">Гипер-Фьюжен</div>
<div class="t" style="left:898.5px;top:384.0px;font-size:14px;line-height:14px;color:#1f2326;font-weight:400;letter-spacing:0.024px;">"ФьюженТорг" ООО</div>
<div class="t" style="left:1066.6px;top:384.0px;font-size:14px;line-height:14px;color:#1f2326;font-weight:400;">Мини-Фьюжен</div>
<div class="t" style="left:1238.4px;width:126.6px;overflow:hidden;top:384.0px;font-size:14px;line-height:14px;color:#1f2326;font-weight:400;">Перемещение между складами</div>
<div class="t" style="left:336.6px;top:414.5px;font-size:14px;line-height:14px;color:#1f2326;font-weight:400;letter-spacing:0.172px;">00038</div>
<div class="t" style="left:410.7px;top:414.5px;font-size:14px;line-height:14px;color:#1f2326;font-weight:400;letter-spacing:-1.294px;">ПС</div>
<div class="t" style="left:443.5px;top:414.5px;font-size:14px;line-height:14px;color:#1f2326;font-weight:400;letter-spacing:-0.088px;">09.10.24</div>
<div class="t" style="right:885.8px;top:414.5px;font-size:14px;line-height:14px;color:#1f2326;font-weight:400;">11:46</div>
<div class="t" style="left:555.3px;top:414.5px;font-size:14px;line-height:14px;color:#1f2326;font-weight:400;letter-spacing:0.024px;">"ФьюженТорг" ООО</div>
<div class="t" style="left:723.5px;top:414.5px;font-size:14px;line-height:14px;color:#1f2326;font-weight:400;letter-spacing:0.176px;">Гипер-Фьюжен</div>
<div class="t" style="left:898.5px;top:414.5px;font-size:14px;line-height:14px;color:#1f2326;font-weight:400;letter-spacing:0.024px;">"ФьюженТорг" ООО</div>
<div class="t" style="left:1066.6px;top:414.5px;font-size:14px;line-height:14px;color:#1f2326;font-weight:400;">Мини-Фьюжен</div>
<div class="t" style="left:1238.4px;width:126.6px;overflow:hidden;top:414.5px;font-size:14px;line-height:14px;color:#1f2326;font-weight:400;">Перемещение между складами</div>
<svg style="position:absolute;left:0;top:0" width="1428" height="824"><rect x="262.6" y="322.9" width="13" height="13" rx="2.6" fill="#fff" stroke="#dfe2e5" stroke-width="1"/><rect x="304.2" y="322.5" width="13.8" height="13.8" rx="2.8" fill="#2c3a4b"/><path d="M307.6 329.5l2.4 2.4 4.6-4.6" fill="none" stroke="#fff" stroke-width="1.8"/><rect x="262.6" y="353.4" width="13" height="13" rx="2.6" fill="#fff" stroke="#dfe2e5" stroke-width="1"/><rect x="304.2" y="353.0" width="13.8" height="13.8" rx="2.8" fill="#2c3a4b"/><path d="M307.6 360.0l2.4 2.4 4.6-4.6" fill="none" stroke="#fff" stroke-width="1.8"/><rect x="262.6" y="383.9" width="13" height="13" rx="2.6" fill="#fff" stroke="#dfe2e5" stroke-width="1"/><rect x="304.2" y="383.5" width="13.8" height="13.8" rx="2.8" fill="#2c3a4b"/><path d="M307.6 390.5l2.4 2.4 4.6-4.6" fill="none" stroke="#fff" stroke-width="1.8"/><rect x="262.6" y="414.4" width="13" height="13" rx="2.6" fill="#fff" stroke="#dfe2e5" stroke-width="1"/><rect x="304.2" y="414.0" width="13.8" height="13.8" rx="2.8" fill="#2c3a4b"/><path d="M307.6 421.0l2.4 2.4 4.6-4.6" fill="none" stroke="#fff" stroke-width="1.8"/></svg>
<svg style="position:absolute;left:0;top:0" width="1428" height="824"><path d="M252.6 433.6L700 434.6L1363 436" stroke="#f03c44" stroke-width="4" stroke-linecap="round" fill="none"/></svg>
<div style="position:absolute;left:1367px;top:334px;width:13px;height:87px;background:#dadada;border-radius:0px;box-sizing:border-box;"></div>
<div style="position:absolute;left:265px;top:440px;width:475px;height:13px;background:#dadada;border-radius:0px;box-sizing:border-box;"></div>
<div style="position:absolute;left:248px;top:455px;width:1134px;height:1px;background:#dde0e3;border-radius:0px;box-sizing:border-box;"></div>
<svg style="position:absolute;left:0;top:0" width="1428" height="824"><g fill="#d3d5d7"><path d="M1369.8 267h7.4l-3.7-3.8z"/><path d="M1369.8 427.4h7.4l-3.7 3.8z"/><path d="M258.2 442.6v7.2l-3.6-3.6z"/><path d="M1355 442.6v7.2l3.6-3.6z"/></g></svg>
<svg style="position:absolute;left:0;top:0" width="1428" height="824"><rect x="248.2" y="464.79999999999995" width="26.7" height="25.8" rx="6" fill="#e5e6e7"/><circle cx="255" cy="472.4" r="1.1" fill="#fff"/><rect x="258.7" y="471.4" width="11.2" height="2" rx="1" fill="#fff"/><circle cx="255" cy="476.59999999999997" r="1.1" fill="#fff"/><rect x="258.7" y="475.59999999999997" width="11.2" height="2" rx="1" fill="#fff"/><circle cx="255" cy="481.29999999999995" r="1.1" fill="#fff"/><rect x="258.7" y="480.29999999999995" width="11.2" height="2" rx="1" fill="#fff"/><g fill="none" stroke="#8d9598" stroke-width="1.4"><rect x="278.09999999999997" y="471.09999999999997" width="16.5" height="11.8" rx="1.8"/><path d="M283.59999999999997 471.09999999999997v11.8M289.09999999999997 471.09999999999997v11.8M278.09999999999997 477.0h16.5"/></g><g fill="none" stroke="#8d9598" stroke-width="1.3"><rect x="303.3" y="469.79999999999995" width="16.8" height="16.2" rx="2"/><path d="M303.3 473.0h16.8M307.20000000000005 468.4v2.6M316.20000000000005 468.4v2.6"/></g><g fill="#8d9598"><rect x="306.20000000000005" y="479.79999999999995" width="1.8" height="1.6"/><rect x="308.8" y="479.79999999999995" width="1.8" height="1.6"/><rect x="311.40000000000003" y="476.79999999999995" width="1.8" height="1.6"/><rect x="314.0" y="476.79999999999995" width="1.8" height="1.6"/></g><path d="M340.8 470.2H354.59999999999997L349.4 478.0V484.0L346.0 485.0V478.0Z" fill="none" stroke="#8d9598" stroke-width="1.3" stroke-linejoin="round"/><path d="M389.00 476.27 L391.05 476.46 L391.05 478.34 L389.00 478.53 L387.90 481.20 L389.21 482.78 L387.88 484.11 L386.30 482.80 L383.63 483.90 L383.44 485.95 L381.56 485.95 L381.37 483.90 L378.70 482.80 L377.12 484.11 L375.79 482.78 L377.10 481.20 L376.00 478.53 L373.95 478.34 L373.95 476.46 L376.00 476.27 L377.10 473.60 L375.79 472.02 L377.12 470.69 L378.70 472.00 L381.37 470.90 L381.56 468.85 L383.44 468.85 L383.63 470.90 L386.30 472.00 L387.88 470.69 L389.21 472.02 L387.90 473.60Z" fill="none" stroke="#8d9598" stroke-width="1.3" stroke-linejoin="round"/><circle cx="382.5" cy="477.4" r="3" fill="none" stroke="#8d9598" stroke-width="1.3"/><path d="M436 477.4h13.8M442.9 470.4v14" stroke="#8d9598" stroke-width="1.5"/><g fill="none" stroke="#8d9598" stroke-width="1.5" stroke-linecap="round" stroke-linejoin="round"><path d="M469.40000000000003 479.2v4.2c0 .8.5 1.3 1.3 1.3h15c.8 0 1.3-.5 1.3-1.3v-4.2"/><path d="M478.20000000000005 470.0v10.4M474.20000000000005 476.4l4 4 4-4"/></g><g fill="none" stroke="#8d9598" stroke-width="1.6"><path d="M517.6 471.9H508.8A3.6 3.6 0 0 0 505.2 475.5V479.59999999999997"/><path d="M509.59999999999997 481.9H518.6A3.6 3.6 0 0 0 522.2 478.29999999999995V474.0"/></g><path d="M517.2 469.2L520.4 471.9 517.2 474.59999999999997z" fill="#8d9598"/><path d="M510.0 479.2L506.8 481.9 510.0 484.59999999999997z" fill="#8d9598"/></svg>
<div class="t" style="left:408.3px;top:471.6px;font-size:11.8px;line-height:11.8px;color:#8d9598;font-weight:400;letter-spacing:-0.229px;">123</div>
<svg style="position:absolute;left:0;top:0" width="1428" height="824"><rect x="248.2" y="744.8" width="26.7" height="25.8" rx="6" fill="#e5e6e7"/><circle cx="255" cy="752.4" r="1.1" fill="#fff"/><rect x="258.7" y="751.4" width="11.2" height="2" rx="1" fill="#fff"/><circle cx="255" cy="756.6" r="1.1" fill="#fff"/><rect x="258.7" y="755.6" width="11.2" height="2" rx="1" fill="#fff"/><circle cx="255" cy="761.3" r="1.1" fill="#fff"/><rect x="258.7" y="760.3" width="11.2" height="2" rx="1" fill="#fff"/><g fill="none" stroke="#8d9598" stroke-width="1.4"><rect x="278.09999999999997" y="751.1" width="16.5" height="11.8" rx="1.8"/><path d="M283.59999999999997 751.1v11.8M289.09999999999997 751.1v11.8M278.09999999999997 757.0h16.5"/></g><path d="M314.8 750.1999999999999H328.59999999999997L323.4 758.0V764.0L320.0 765.0V758.0Z" fill="none" stroke="#8d9598" stroke-width="1.3" stroke-linejoin="round"/><path d="M363.70 756.27 L365.75 756.46 L365.75 758.34 L363.70 758.53 L362.60 761.20 L363.91 762.78 L362.58 764.11 L361.00 762.80 L358.33 763.90 L358.14 765.95 L356.26 765.95 L356.07 763.90 L353.40 762.80 L351.82 764.11 L350.49 762.78 L351.80 761.20 L350.70 758.53 L348.65 758.34 L348.65 756.46 L350.70 756.27 L351.80 753.60 L350.49 752.02 L351.82 750.69 L353.40 752.00 L356.07 750.90 L356.26 748.85 L358.14 748.85 L358.33 750.90 L361.00 752.00 L362.58 750.69 L363.91 752.02 L362.60 753.60Z" fill="none" stroke="#8d9598" stroke-width="1.3" stroke-linejoin="round"/><circle cx="357.2" cy="757.4" r="3" fill="none" stroke="#8d9598" stroke-width="1.3"/><path d="M411 757.4h13.8M417.9 750.4v14" stroke="#8d9598" stroke-width="1.5"/><g fill="none" stroke="#8d9598" stroke-width="1.5" stroke-linecap="round" stroke-linejoin="round"><path d="M444.0 759.1999999999999v4.2c0 .8.5 1.3 1.3 1.3h15c.8 0 1.3-.5 1.3-1.3v-4.2"/><path d="M452.8 750.0v10.4M448.8 756.4l4 4 4-4"/></g><g fill="none" stroke="#8d9598" stroke-width="1.6"><path d="M492.0 751.9H483.20000000000005A3.6 3.6 0 0 0 479.6 755.5V759.6"/><path d="M484.0 761.9H493.0A3.6 3.6 0 0 0 496.6 758.3V754.0"/></g><path d="M491.6 749.1999999999999L494.8 751.9 491.6 754.6z" fill="#8d9598"/><path d="M484.40000000000003 759.1999999999999L481.20000000000005 761.9 484.40000000000003 764.6z" fill="#8d9598"/></svg>
<div class="t" style="left:382.8px;top:751.6px;font-size:11.8px;line-height:11.8px;color:#8d9598;font-weight:400;letter-spacing:-0.229px;">123</div>
<svg style="position:absolute;left:0;top:0" width="1428" height="824"><rect x="821.2" y="471.1" width="13.5" height="13.5" rx="2.8" fill="#2c3a4b"/><path d="M824.4 478l2.4 2.4 4.4-4.4" fill="none" stroke="#fff" stroke-width="1.7"/></svg>
<div class="t" style="left:839.1px;top:470.0px;font-size:14px;line-height:14px;color:#2a2e33;font-weight:400;letter-spacing:-0.295px;">Открыт (F6)</div>
<div style="position:absolute;left:920px;top:464.4px;width:82px;height:27px;border:1px solid #aab6b2;border-radius:6px;box-sizing:border-box"></div>
<div class="t" style="left:934.8px;top:471.8px;font-size:14px;line-height:14px;color:#a6abae;font-weight:400;letter-spacing:-0.246px;">Закрыть</div>
<div style="position:absolute;left:1010px;top:464px;width:111px;height:28px;background:#2c3b4d;border-radius:6px"></div>
<svg style="position:absolute;left:0;top:0" width="1428" height="824"><path d="M1028.4 478.2h7M1031.9 474.7v7" stroke="#fff" stroke-width="1.6"/></svg>
<div class="t" style="left:1045.3px;top:471.8px;font-size:14px;line-height:14px;color:#fff;font-weight:400;letter-spacing:-0.034px;-webkit-text-stroke:0.3px #fff;">Добавить</div>
<svg style="position:absolute;left:0;top:0" width="1428" height="824"><g fill="none" stroke="#1fb89a" stroke-width="1.4"><path d="M1152.6 472.4H1147a1.3 1.3 0 0 0-1.3 1.3V482.4a1.3 1.3 0 0 0 1.3 1.3H1155.8a1.3 1.3 0 0 0 1.3-1.3V477.4"/></g><path fill="#1fb89a" d="M1156.6 471l2.1 2.1-7.6 7.6-3.2.9.9-3.2z"/></svg>
<div class="t" style="left:1165.3px;top:472.2px;font-size:14px;line-height:14px;color:#1fb89a;font-weight:400;letter-spacing:-0.171px;">Редактировать</div>
<div style="position:absolute;left:1283.3px;top:464.3px;width:98.3px;height:27.4px;border:1px solid #a3b0ac;border-radius:6px;box-sizing:border-box"></div>
<svg style="position:absolute;left:0;top:0" width="1428" height="824"><path d="M1297.3 477.4h11.9" stroke="#9aa3a6" stroke-width="1.6"/></svg>
<div class="t" style="left:1316.7px;top:472.1px;font-size:14px;line-height:14px;color:#9ea3a6;font-weight:400;letter-spacing:-0.45px;">Удалить</div>
<div style="position:absolute;left:237px;top:529px;width:1149px;height:1px;background:#cdd1d6;border-radius:0px;box-sizing:border-box;"></div>
<div style="position:absolute;left:244.5px;top:502.2px;width:168.1px;height:27.8px;background:#fff;border:1px solid #cfd3d8;border-bottom:none;border-radius:6px 6px 0 0;box-sizing:border-box"></div>
<div class="t" style="left:280.4px;top:509.3px;font-size:14px;line-height:14px;color:#1fb89a;font-weight:400;letter-spacing:-0.183px;">Спецификация</div>
<div class="t" style="left:448.9px;top:509.1px;font-size:14px;line-height:14px;color:#a3a8ab;font-weight:400;letter-spacing:-0.34px;">Сертификаты</div>
<div class="t" style="left:608.2px;top:509.1px;font-size:14px;line-height:14px;color:#a3a8ab;font-weight:400;letter-spacing:-0.157px;">История</div>
<div class="t" style="left:735.1px;top:509.1px;font-size:14px;line-height:14px;color:#a3a8ab;font-weight:400;letter-spacing:-0.259px;">Печатные формы</div>
<div class="t" style="left:919.7px;top:509.1px;font-size:14px;line-height:14px;color:#a3a8ab;font-weight:400;letter-spacing:-0.205px;">Действия</div>
<div class="t" style="left:1052.6px;top:509.1px;font-size:14px;line-height:14px;color:#a3a8ab;font-weight:400;letter-spacing:-0.003px;">Транспорт</div>
<div class="t" style="left:1192.7px;top:509.1px;font-size:14px;line-height:14px;color:#a3a8ab;font-weight:400;letter-spacing:-0.461px;">Ветис</div>
<div class="t" style="left:1301.1px;top:509.1px;font-size:14px;line-height:14px;color:#a3a8ab;font-weight:400;letter-spacing:-0.86px;">ЕГАИС</div>
<div style="position:absolute;left:248px;top:540px;width:1117px;height:181.5px;background:#fff;border-radius:0px;box-sizing:border-box;"></div>
<div style="position:absolute;left:248px;top:604.7px;width:1117px;height:30.5px;background:#e3e3e3;border-radius:0px;box-sizing:border-box;"></div>
<div style="position:absolute;left:248px;top:604.7px;width:73.8px;height:30.5px;background:#b9b9b9;border-radius:0px;box-sizing:border-box;"></div>
<div style="position:absolute;left:248px;top:666px;width:1117px;height:1px;background:#e1e4e7;border-radius:0px;box-sizing:border-box;"></div>
<div style="position:absolute;left:248px;top:697px;width:1117px;height:1px;background:#e1e4e7;border-radius:0px;box-sizing:border-box;"></div>
<svg style="position:absolute;left:0;top:0" width="1428" height="824"><g fill="#25292d"><rect x="255" y="567.6" width="1.3" height="9.4"/><path d="M255.65 565.8l2.9 3.4h-5.8z"/><rect x="259.9" y="566.4" width="1.6" height="1.4"/><rect x="259.9" y="569.1" width="3.8" height="1.3"/><rect x="259.9" y="572.5" width="6" height="1.3"/><rect x="259.9" y="575.9" width="6.3" height="1.3"/></g></svg>
<div class="t" style="right:1110.8px;top:555.8px;font-size:12px;line-height:12px;color:#25292d;font-weight:700;">Номер</div>
<div class="t" style="right:1110.8px;top:574.7px;font-size:12px;line-height:12px;color:#25292d;font-weight:700;">строки</div>
<div class="t" style="left:327.0px;top:566.3px;font-size:12px;line-height:12px;color:#25292d;font-weight:700;letter-spacing:0.118px;">Штрихкод</div>
<div class="t" style="left:457.8px;top:566.3px;font-size:12px;line-height:12px;color:#25292d;font-weight:700;">Код</div>
<div class="t" style="left:548.1px;top:566.3px;font-size:12px;line-height:12px;color:#25292d;font-weight:700;letter-spacing:0.138px;">Наименование</div>
<div class="t" style="left:802.2px;top:556.3px;font-size:12px;line-height:12px;color:#25292d;font-weight:700;">Ед.</div>
<div class="t" style="left:802.2px;width:23.8px;overflow:hidden;top:575.2px;font-size:12px;line-height:12px;color:#25292d;font-weight:700;">изм.</div>
<div class="t" style="left:834.9px;top:566.3px;font-size:12px;line-height:12px;color:#25292d;font-weight:700;letter-spacing:-0.056px;">Партия</div>
<div class="t" style="right:365.1px;top:566.0px;font-size:12px;line-height:12px;color:#25292d;font-weight:700;">Кол-во</div>
<div class="t" style="right:299.1px;top:566.0px;font-size:12px;line-height:12px;color:#25292d;font-weight:700;">Цена</div>
<div class="t" style="right:216.7px;top:566.0px;font-size:12px;line-height:12px;color:#25292d;font-weight:700;">Сумма</div>
<div class="t" style="left:1220.9px;top:547.3px;font-size:12px;line-height:12px;color:#25292d;font-weight:700;">Дата</div>
<div class="t" style="left:1220.9px;top:566.0px;font-size:12px;line-height:12px;color:#25292d;font-weight:700;">изготов-</div>
<div class="t" style="left:1220.9px;top:584.2px;font-size:12px;line-height:12px;color:#25292d;font-weight:700;">ления</div>
<div class="t" style="left:1284.1px;top:566.0px;font-size:12px;line-height:12px;color:#25292d;font-weight:700;letter-spacing:-0.2px;">Годен до</div>
<div class="t" style="left:1347.7px;width:17.3px;overflow:hidden;top:566.0px;font-size:12px;line-height:12px;color:#25292d;font-weight:700;">Заказ</div>
<div class="t" style="right:1110.8px;top:612.5px;font-size:14px;line-height:14px;color:#1f2326;font-weight:400;">1</div>
<div class="t" style="left:327.0px;top:612.5px;font-size:14px;line-height:14px;color:#1f2326;font-weight:400;letter-spacing:0.172px;">00012</div>
<div class="t" style="left:457.8px;top:612.5px;font-size:14px;line-height:14px;color:#1f2326;font-weight:400;letter-spacing:0.172px;">00060</div>
<div class="t" style="left:548.1px;top:612.5px;font-size:14px;line-height:14px;color:#1f2326;font-weight:400;letter-spacing:-0.285px;">Банан свежий вес Витамин</div>
<div class="t" style="left:802.2px;top:612.5px;font-size:14px;line-height:14px;color:#1f2326;font-weight:400;">кг</div>
<div class="t" style="right:365.1px;top:612.5px;font-size:14px;line-height:14px;color:#1f2326;font-weight:400;">10</div>
<div class="t" style="right:299.1px;top:612.5px;font-size:14px;line-height:14px;color:#1f2326;font-weight:400;">121,67</div>
<div class="t" style="right:216.7px;top:612.5px;font-size:14px;line-height:14px;color:#1f2326;font-weight:400;">1 216,70</div>
<div class="t" style="right:1110.8px;top:643.4px;font-size:14px;line-height:14px;color:#1f2326;font-weight:400;">2</div>
<div class="t" style="left:327.0px;top:643.4px;font-size:14px;line-height:14px;color:#1f2326;font-weight:400;letter-spacing:0.172px;">00005</div>
<div class="t" style="left:457.8px;top:643.4px;font-size:14px;line-height:14px;color:#1f2326;font-weight:400;letter-spacing:0.172px;">00028</div>
<div class="t" style="left:548.1px;top:643.4px;font-size:14px;line-height:14px;color:#1f2326;font-weight:400;letter-spacing:-0.253px;">Баклажан свежий вес Витамин</div>
<div class="t" style="left:802.2px;top:643.4px;font-size:14px;line-height:14px;color:#1f2326;font-weight:400;">кг</div>
<div class="t" style="right:365.1px;top:643.4px;font-size:14px;line-height:14px;color:#1f2326;font-weight:400;">3</div>
<div class="t" style="right:299.1px;top:643.4px;font-size:14px;line-height:14px;color:#1f2326;font-weight:400;">213,83</div>
<div class="t" style="right:216.7px;top:643.4px;font-size:14px;line-height:14px;color:#1f2326;font-weight:400;">641,49</div>
<div class="t" style="right:1110.8px;top:674.3px;font-size:14px;line-height:14px;color:#1f2326;font-weight:400;">3</div>
<div class="t" style="left:327.0px;top:674.3px;font-size:14px;line-height:14px;color:#1f2326;font-weight:400;letter-spacing:0.172px;">00002</div>
<div class="t" style="left:457.8px;top:674.3px;font-size:14px;line-height:14px;color:#1f2326;font-weight:400;letter-spacing:0.172px;">00024</div>
<div class="t" style="left:548.1px;top:674.3px;font-size:14px;line-height:14px;color:#1f2326;font-weight:400;letter-spacing:-0.148px;">Кабачок свежий вес Витамин</div>
<div class="t" style="left:802.2px;top:674.3px;font-size:14px;line-height:14px;color:#1f2326;font-weight:400;">кг</div>
<div class="t" style="right:365.1px;top:674.3px;font-size:14px;line-height:14px;color:#1f2326;font-weight:400;">3</div>
<div class="t" style="right:299.1px;top:674.3px;font-size:14px;line-height:14px;color:#1f2326;font-weight:400;">165,88</div>
<div class="t" style="right:216.7px;top:674.3px;font-size:14px;line-height:14px;color:#1f2326;font-weight:400;">497,64</div>
<div class="t" style="right:1110.8px;top:705.2px;font-size:14px;line-height:14px;color:#1f2326;font-weight:400;">4</div>
<div class="t" style="left:327.0px;top:705.2px;font-size:14px;line-height:14px;color:#1f2326;font-weight:400;letter-spacing:0.172px;">00003</div>
<div class="t" style="left:457.8px;top:705.2px;font-size:14px;line-height:14px;color:#1f2326;font-weight:400;letter-spacing:0.172px;">00025</div>
<div class="t" style="left:548.1px;top:705.2px;font-size:14px;line-height:14px;color:#1f2326;font-weight:400;letter-spacing:-0.275px;">Картофель свежий вес Витамин</div>
<div class="t" style="left:802.2px;top:705.2px;font-size:14px;line-height:14px;color:#1f2326;font-weight:400;">кг</div>
<div class="t" style="right:365.1px;top:705.2px;font-size:14px;line-height:14px;color:#1f2326;font-weight:400;">20</div>
<div class="t" style="right:299.1px;top:705.2px;font-size:14px;line-height:14px;color:#1f2326;font-weight:400;">14,2501</div>
<div class="t" style="right:216.7px;top:705.2px;font-size:14px;line-height:14px;color:#1f2326;font-weight:400;">285,00</div>
<div style="position:absolute;left:248px;top:721.5px;width:1117px;height:4px;background:#f7f8fa;border-radius:0px;box-sizing:border-box;"></div>
<div style="position:absolute;left:1367.2px;top:556.6px;width:12.8px;height:142.6px;background:#dadada;border-radius:0px;box-sizing:border-box;"></div>
<div style="position:absolute;left:265px;top:724px;width:753.6px;height:12.7px;background:#dadada;border-radius:0px;box-sizing:border-box;"></div>
<div style="position:absolute;left:248px;top:739.5px;width:1133px;height:1px;background:#dde0e3;border-radius:0px;box-sizing:border-box;"></div>
<svg style="position:absolute;left:0;top:0" width="1428" height="824"><g fill="#d3d5d7"><path d="M1369.9 551.8h7.4l-3.7-3.8z"/><path d="M1369.9 711.4h7.4l-3.7 3.8z"/><path d="M258.2 726.8v7.2l-3.6-3.6z"/><path d="M1355 726.8v7.2l3.6-3.6z"/></g></svg>
<div style="position:absolute;left:244px;top:777px;width:1142px;height:1px;background:#d5d9dd;border-radius:0px;box-sizing:border-box;"></div>
<svg style="position:absolute;left:0;top:0" width="1428" height="824"><g fill="#2a2e33"><circle cx="269.6" cy="797.6" r="1.4"/><circle cx="269.6" cy="802.2" r="1.4"/><circle cx="269.6" cy="806.8" r="1.4"/></g><rect x="300.8" y="794.6" width="14.6" height="14.6" rx="3" fill="#fff" stroke="#d8dcdf"/></svg>
<div class="t" style="left:325.2px;top:795.3px;font-size:14px;line-height:14px;color:#2a2e33;font-weight:400;letter-spacing:-0.062px;">Включить корректировку на форме</div>
<div style="position:absolute;left:905px;top:788.2px;width:41.6px;height:26.5px;border:1px solid #b3bfbb;border-radius:6px;box-sizing:border-box"></div>
<svg style="position:absolute;left:0;top:0" width="1428" height="824"><circle cx="926.2" cy="801.7" r="4.4" fill="none" stroke="#9aa4a6" stroke-width="1.2"/><g fill="#9aa4a6"><path d="M919.8 802.1L923.2 799.9V804.3Z"/><path d="M932.8 801.4L929.4 799.2V803.6Z"/></g></svg>
<div style="position:absolute;left:956.2px;top:788.2px;width:116.6px;height:26.5px;border:1px solid #7b8894;border-radius:6px;box-sizing:border-box"></div>
<svg style="position:absolute;left:0;top:0" width="1428" height="824"><g fill="none" stroke="#8a949b" stroke-width="1.3"><path d="M974.4 795.4H971.2a.8.8 0 0 0-.8.8V807.8a.8.8 0 0 0 .8.8H984a.8.8 0 0 0 .8-.8V796.2a.8.8 0 0 0-.8-.8H980.8"/><path d="M977.6 795v9.2M974.4 801l3.2 3.2 3.2-3.2"/></g></svg>
<div class="t" style="left:991.5px;top:794.7px;font-size:14px;line-height:14px;color:#6f7a83;font-weight:400;letter-spacing:-0.331px;">Сохранить</div>
<div style="position:absolute;left:1082.4px;top:788.6px;width:111.3px;height:26px;border:1px solid #cbd5d2;border-radius:6px;box-sizing:border-box"></div>
<svg style="position:absolute;left:0;top:0" width="1428" height="824"><g fill="none" stroke="#c3c9c8" stroke-width="1.3"><rect x="1096.4" y="796.4" width="14" height="3.4" rx=".6"/><path d="M1097.6 799.8v7.6h11.6v-7.6M1101.2 802.4h4.4"/></g></svg>
<div class="t" style="left:1117.0px;top:794.7px;font-size:14px;line-height:14px;color:#c0c6c5;font-weight:400;letter-spacing:-0.211px;">Отменить</div>
<div style="position:absolute;left:1203px;top:788.6px;width:67.8px;height:26px;background:#2c3b4d;border-radius:6px"></div>
<svg style="position:absolute;left:0;top:0" width="1428" height="824"><path d="M1217.2 801.6l4.2 4.2 8.4-8.4" fill="none" stroke="#fff" stroke-width="2.2"/></svg>
<div class="t" style="left:1236.2px;top:794.3px;font-size:15px;line-height:15px;color:#fff;font-weight:400;letter-spacing:-0.594px;">OK</div>
<div style="position:absolute;left:1280.2px;top:788.6px;width:101.8px;height:26px;background:#939f9d;border-radius:6px"></div>
<svg style="position:absolute;left:0;top:0" width="1428" height="824"><path d="M1298 798.6l6 6M1304 798.6l-6 6" stroke="#fff" stroke-width="1.3"/></svg>
<div class="t" style="left:1314.3px;top:794.9px;font-size:14px;line-height:14px;color:#fff;font-weight:400;letter-spacing:-0.146px;">Закрыть</div>
</body></html>
